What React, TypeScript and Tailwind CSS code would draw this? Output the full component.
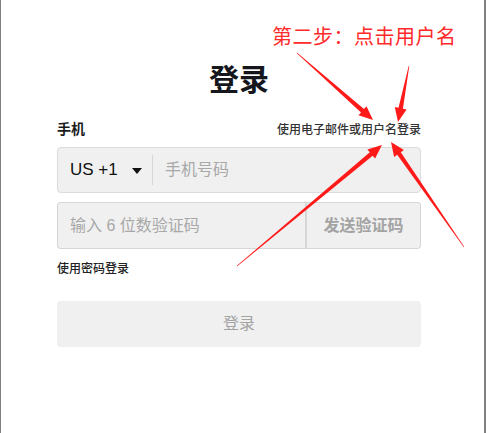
import React from 'react';

type Pt = [number, number];

// tapered red arrow drawn from a thin tail to a filled head
const arrowPoints = (from: Pt, to: Pt, headLen = 14, headHalf = 6, shaftHalf = 2.2) => {
  const dx = to[0] - from[0];
  const dy = to[1] - from[1];
  const len = Math.hypot(dx, dy);
  const ux = dx / len;
  const uy = dy / len;
  const nx = -uy;
  const ny = ux;
  const bx = to[0] - ux * headLen;
  const by = to[1] - uy * headLen;
  const p = (x: number, y: number) => `${x.toFixed(1)},${y.toFixed(1)}`;
  return [
    p(from[0] + nx * 0.3, from[1] + ny * 0.3),
    p(bx + nx * shaftHalf, by + ny * shaftHalf),
    p(bx + nx * headHalf, by + ny * headHalf),
    p(to[0], to[1]),
    p(bx - nx * headHalf, by - ny * headHalf),
    p(bx - nx * shaftHalf, by - ny * shaftHalf),
    p(from[0] - nx * 0.3, from[1] - ny * 0.3),
  ].join(' ');
};

const arrows: { from: Pt; to: Pt }[] = [
  { from: [296, 53], to: [372, 120] },
  { from: [408, 66], to: [397, 122] },
  { from: [236, 266], to: [381, 145] },
  { from: [463, 247], to: [390, 142] },
];

const App: React.FC = () => {
  return (
    <div
      className="relative w-[486px] h-[433px] bg-white border-l-[1.5px] border-r-2 border-[#808080] overflow-hidden"
      style={{ fontFamily: '"Liberation Sans", "Noto Sans CJK SC", sans-serif' }}
    >
      <div className="pl-[56px] pt-[61px] w-[420px]">
        <h1 className="text-center text-[30px] leading-[38px] font-bold text-[#15171c]">登录</h1>

        <div className="mt-[21px] flex items-end justify-between h-[18px]">
          <span className="text-[14px] font-bold text-[#1b1b1b] leading-[18px]">手机</span>
          <span className="text-[12px] font-medium text-[#333] leading-[16px]">使用电子邮件或用户名登录</span>
        </div>

        <div className="mt-[9px] flex items-center h-[46px] rounded-[4px] border border-[#dcdcdc] bg-[#f0f0f0]">
          <div className="flex items-center pl-[12px] w-[94px]">
            <span className="text-[17px] text-[#111]">US +1</span>
            <svg width="10" height="6" viewBox="0 0 10 6" className="ml-[14px] mt-[1px]">
              <polygon points="0,0 10,0 5,6" fill="#111" />
            </svg>
          </div>
          <div className="w-px h-[30px] bg-[#d6d6d6]" />
          <span className="pl-[12px] text-[16px] text-[#a8a8a8]">手机号码</span>
        </div>

        <div className="mt-[9px] flex h-[47px]">
          <div className="flex-1 flex items-center pl-[12px] rounded-l-[4px] border border-r-2 border-[#d6d6d6] bg-[#f0f0f0]">
            <span className="text-[16px] text-[#a8a8a8]">输入 6 位数验证码</span>
          </div>
          <div className="w-[114px] flex items-center justify-center rounded-r-[4px] border border-l-0 border-[#d6d6d6] bg-[#f0f0f0]">
            <span className="text-[16px] font-bold text-[#a3a3a3]">发送验证码</span>
          </div>
        </div>

        <div className="mt-[12px] text-[12px] font-medium text-[#222] leading-[16px]">使用密码登录</div>

        <button className="mt-[24px] w-full h-[46px] rounded-[4px] bg-[#f0f0f0] text-[16px] text-[#a3a3a3]">
          登录
        </button>
      </div>

      <div className="absolute left-[271px] top-[24px] text-[20px] leading-[26px] text-[#ff2a2a] tracking-[0.5px]">
        第二步：点击用户名
      </div>

      <svg className="absolute inset-0 pointer-events-none" width="486" height="433">
        {arrows.map((a, i) => (
          <polygon key={i} points={arrowPoints(a.from, a.to)} fill="#ff1a1a" />
        ))}
      </svg>
    </div>
  );
};

export default App;
